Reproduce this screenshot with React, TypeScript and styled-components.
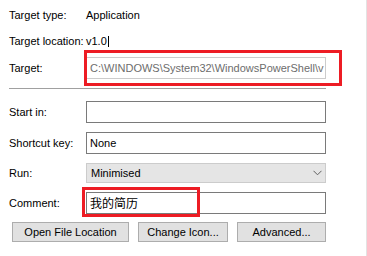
import React from "react";
import styled, { createGlobalStyle } from "styled-components";

const Global = createGlobalStyle`
  html, body { margin: 0; padding: 0; background: #ffffff; }
  body { font-family: "Liberation Sans", Arial, sans-serif; font-size: 11px; color: #000; }
`;

const Page = styled.div`
  position: relative;
  width: 367px;
  height: 256px;
  border-right: 1px solid #e3e3e3;
  box-sizing: border-box;
  padding-left: 9px;
  display: flex;
  flex-direction: column;
  overflow: hidden;
`;

const Row = styled.div<{ $h: number; $mt?: number }>`
  display: flex;
  align-items: center;
  height: ${(p) => p.$h}px;
  margin-top: ${(p) => p.$mt ?? 0}px;
  position: relative;
`;

const Label = styled.div`
  width: 77px;
  flex: none;
  white-space: nowrap;
`;

const Value = styled.div`
  white-space: nowrap;
  display: flex;
  align-items: center;
`;

const Caret = styled.span`
  display: inline-block;
  width: 1px;
  height: 11px;
  background: #000;
  margin-left: 1px;
`;

const Field = styled.div<{ $disabled?: boolean }>`
  box-sizing: border-box;
  width: 240px;
  height: 22px;
  border: 1px solid ${(p) => (p.$disabled ? "#cccccc" : "#7a7a7a")};
  color: ${(p) => (p.$disabled ? "#6d6d6d" : "#000")};
  background: #fff;
  padding: 0 0 0 3px;
  display: flex;
  align-items: center;
  white-space: nowrap;
  overflow: hidden;
`;

const Cjk = styled.span`
  font-family: "Noto Sans CJK SC", "Liberation Sans", sans-serif;
  font-size: 12px;
  line-height: 1;
`;

const Select = styled.div`
  box-sizing: border-box;
  width: 240px;
  height: 20px;
  border: 1px solid #cccccc;
  background: #e5e5e5;
  display: flex;
  align-items: center;
  justify-content: space-between;
  padding: 0 3px 0 4px;
`;

const Separator = styled.div`
  width: 317px;
  height: 1px;
  background: #a0a0a0;
  margin-top: 6px;
`;

const ButtonRow = styled.div`
  display: flex;
  gap: 9px;
  margin-top: 8px;
  padding-left: 3px;
`;

const Button = styled.div<{ $w: number }>`
  box-sizing: border-box;
  width: ${(p) => p.$w}px;
  height: 20px;
  background: #e1e1e1;
  border: 1px solid #adadad;
  display: flex;
  align-items: center;
  justify-content: center;
  white-space: nowrap;
`;

const Highlight = styled.div<{ $l: number; $t: number; $w: number; $h: number }>`
  position: absolute;
  left: ${(p) => p.$l}px;
  top: ${(p) => p.$t}px;
  width: ${(p) => p.$w}px;
  height: ${(p) => p.$h}px;
  border: 3px solid #ed1c24;
  box-sizing: border-box;
  pointer-events: none;
`;

const Chevron = () => (
  <svg width="9" height="6" viewBox="0 0 9 6">
    <path d="M0.5 0.8 L4.5 4.8 L8.5 0.8" fill="none" stroke="#606060" strokeWidth="1" />
  </svg>
);

export default function App() {
  return (
    <>
      <Global />
      <Page>
        <Row $h={26} $mt={2}>
          <Label>Target type:</Label>
          <Value>Application</Value>
        </Row>
        <Row $h={26}>
          <Label>Target location:</Label>
          <Value>
            v1.0
            <Caret />
          </Value>
        </Row>
        <Row $h={28}>
          <Label>Target:</Label>
          <Field $disabled>C:\WINDOWS\System32\WindowsPowerShell\v</Field>
        </Row>
        <Separator />
        <Row $h={22} $mt={12}>
          <Label>Start in:</Label>
          <Field />
        </Row>
        <Row $h={22} $mt={9}>
          <Label>Shortcut key:</Label>
          <Field>None</Field>
        </Row>
        <Row $h={20} $mt={9}>
          <Label>Run:</Label>
          <Select>
            <span>Minimised</span>
            <Chevron />
          </Select>
        </Row>
        <Row $h={22} $mt={9}>
          <Label>Comment:</Label>
          <Field>
            <Cjk>我的简历</Cjk>
          </Field>
        </Row>
        <ButtonRow>
          <Button $w={117}>Open File Location</Button>
          <Button $w={90}>Change Icon...</Button>
          <Button $w={89}>Advanced...</Button>
        </ButtonRow>
        <Highlight $l={84} $t={50} $w={258} $h={36} />
        <Highlight $l={82} $t={187} $w={118} $h={30} />
      </Page>
    </>
  );
}
